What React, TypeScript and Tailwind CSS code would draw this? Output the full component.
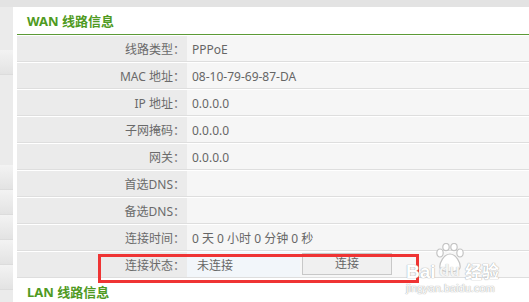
import React from "react";

const rows: { label: string; value: string }[] = [
  { label: "线路类型：", value: "PPPoE" },
  { label: "MAC 地址：", value: "08-10-79-69-87-DA" },
  { label: "IP 地址：", value: "0.0.0.0" },
  { label: "子网掩码：", value: "0.0.0.0" },
  { label: "网关：", value: "0.0.0.0" },
  { label: "首选DNS：", value: "" },
  { label: "备选DNS：", value: "" },
  { label: "连接时间：", value: "0 天 0 小时 0 分钟 0 秒" },
];

const font = { fontFamily: '"Noto Sans", "Noto Sans CJK SC", sans-serif' };

function SideItem({ h }: { h: string }) {
  return <div className={`${h} border-b border-[#dcdcdc] bg-gradient-to-b from-[#f3f3f3] to-[#e3e3e3]`} />;
}

const wm = "text-white [text-shadow:0_0_1px_#aaaaaa,0_0_1px_#aaaaaa] whitespace-nowrap leading-none";

export default function App() {
  return (
    <div className="w-[529px] h-[302px] overflow-hidden bg-white relative" style={font}>
      <div className="h-[7px] bg-[#e3e3e3]" />
      <div className="flex h-[295px]">
        {/* sidebar */}
        <div className="w-[13px] bg-[#ebebeb] flex flex-col">
          <div className="h-[43px]" />
          <SideItem h="h-[25px]" />
          <div className="h-[90px]" />
          <SideItem h="h-[25px]" />
          <SideItem h="h-[25px]" />
          <SideItem h="h-[25px]" />
          <SideItem h="h-[25px]" />
          <SideItem h="h-[25px]" />
        </div>
        <div className="w-[4px] bg-white" />
        {/* main */}
        <div className="flex-1 flex flex-col">
          <div className="h-[28px] flex items-center pl-[10px] pt-[3px] border-b border-[#5c9a36]">
            <span className="text-[13px] font-bold text-[#4f9a22]">WAN 线路信息</span>
          </div>
          {rows.map((r) => (
            <div key={r.label} className="flex h-[27px] border-t border-white border-b border-b-[#dedede]">
              <div className="w-[170px] bg-[#ebebeb] flex items-center justify-end pr-[2px] pt-[2px] text-[12px] text-[#6a6a6a]">
                {r.label}
              </div>
              <div className="flex-1 bg-[#f6f6f6] flex items-center pl-[5px] pt-[2px] text-[12px] text-[#666]">{r.value}</div>
            </div>
          ))}
          <div className="flex h-[27px] border-t border-white border-b border-b-[#dedede]">
            <div className="w-[170px] bg-[#ebebeb] flex items-center justify-end pr-[2px] pt-[2px] text-[12px] text-[#6a6a6a]">
              连接状态：
            </div>
            <div className="flex-1 bg-[#f7f7f7] flex items-center">
              <div className="w-[113px] h-full bg-[#f2f6fa] flex items-center pl-[10px] pt-[2px] text-[12px] text-[#666]">未连接</div>
              <div className="ml-[2px] w-[90px] h-[22px] -mt-[2px] border border-[#c8c8c8] bg-[#f0f0f0] flex items-center justify-center text-[12px] text-[#666]">
                连接
              </div>
            </div>
          </div>
          <div className="h-[24px] flex items-center pl-[10px] pt-[6px]">
            <span className="text-[13px] font-bold text-[#4f9a22]">LAN 线路信息</span>
          </div>
        </div>
      </div>

      {/* red highlight box */}
      <div className="absolute left-[98px] top-[254px] w-[321px] h-[29px] border-[3px] border-[#ef3434]" />

      {/* watermark */}
      <svg className="absolute left-[434px] top-[243px]" width="32" height="32" viewBox="0 0 32 32">
        <g fill="#ffffff" stroke="#c4c4c4" strokeWidth="1.2">
          <ellipse cx="6" cy="10" rx="3.2" ry="4" />
          <ellipse cx="12" cy="4" rx="3.2" ry="3.6" />
          <ellipse cx="20" cy="4" rx="3.2" ry="3.6" />
          <ellipse cx="26" cy="10" rx="3.2" ry="4" />
          <path d="M16 11 C10 11 5 20 6 25 C8 30 24 30 26 25 C27 20 22 11 16 11 Z" />
        </g>
      </svg>
      <div className={`absolute left-[406px] top-[262px] text-[19px] font-bold ${wm}`} style={{ fontFamily: '"Liberation Sans", sans-serif' }}>
        Bai
      </div>
      <div className={`absolute left-[439px] top-[262px] text-[17px] font-bold text-[#f4f4f4] whitespace-nowrap leading-none [text-shadow:0_0_1px_#aaaaaa]`} style={{ fontFamily: '"Liberation Sans", sans-serif' }}>
        du
      </div>
      <div className={`absolute left-[465px] top-[262px] text-[17px] font-bold ${wm}`} style={{ fontFamily: '"Noto Sans CJK SC", sans-serif' }}>
        经验
      </div>
      <div className={`absolute left-[406px] top-[283px] text-[11px] ${wm}`} style={{ fontFamily: '"Liberation Sans", sans-serif' }}>
        jingyan.baidu.com
      </div>
    </div>
  );
}
